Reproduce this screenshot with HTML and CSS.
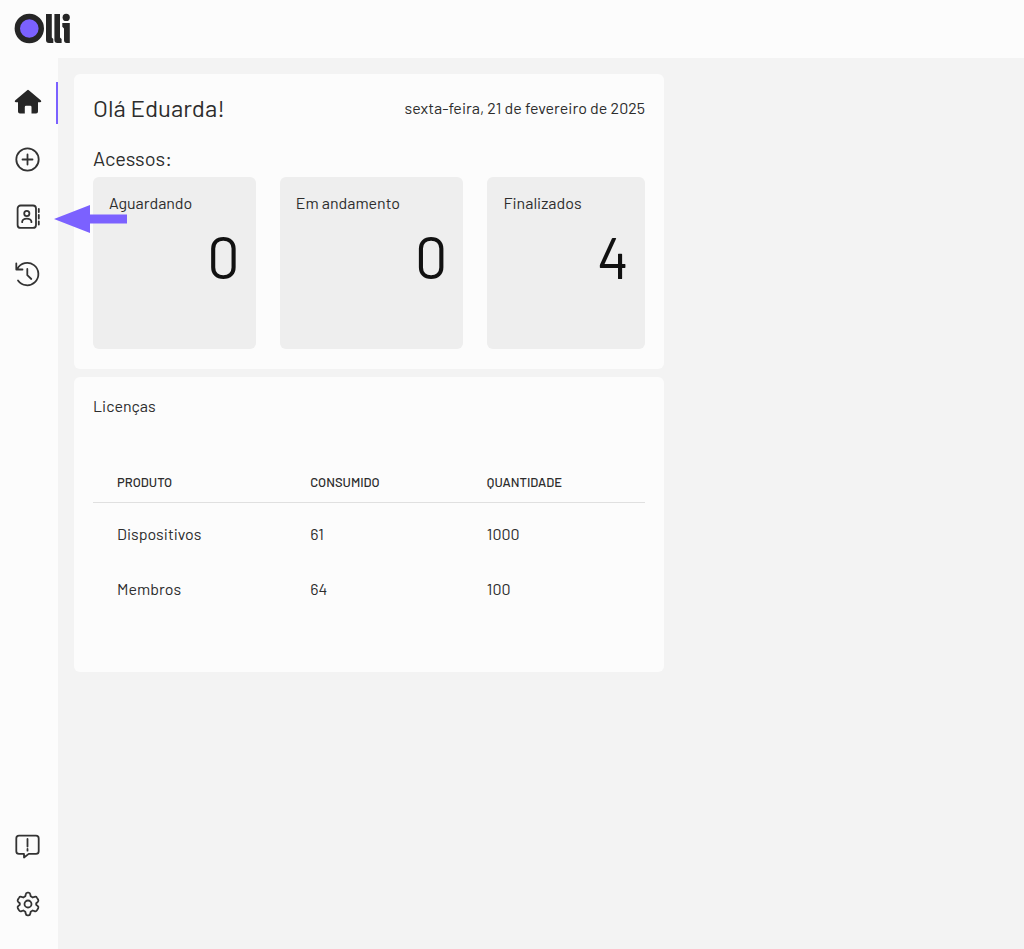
FILE: index.html
```html
<!DOCTYPE html>
<html lang="pt-BR">
<head>
<meta charset="utf-8">
<meta name="viewport" content="width=device-width, initial-scale=1">
<title>Olli</title>
<link rel="stylesheet" href="styles.css">
</head>
<body class="app">
<header class="topbar">
  <a class="brand" href="#" aria-label="Olli">
    <svg width="56" height="32" viewBox="0 0 56 32" aria-hidden="true">
      <circle cx="15.300" cy="15.500" r="12" fill="#7b61ff" stroke="#262626" stroke-width="5.400"/>
      <g fill="#262626">
        <path d="M32 1H37.800V24.500L39.300 26V30H35Q32 30 32 27Z"/>
        <path d="M40.400 1H46V24.500L47.600 26V30H43.400Q40.400 30 40.400 27Z"/>
        <circle cx="52.200" cy="4.400" r="3.600"/>
        <path d="M48.300 10H55.800V30H52.600Q50 30 50 27V15.500L48.300 13.800Z"/>
      </g>
    </svg>
  </a>
</header>
<nav class="sidebar" aria-label="Principal">
  <a class="nav-item nav-item-active" href="#" aria-label="Início" aria-current="page">
    <svg class="icon" viewBox="0 0 28 28"><path d="M13.200 1.200Q14 .5 14.800 1.200L26.700 11.300Q28 13.100 26 13.300H24V22.500Q24 24.500 22 24.500H17.500V18Q17.500 16.800 16.300 16.800H12Q10.800 16.800 10.800 18V24.500H6Q4 24.500 4 22.500V13.300H2Q0 13.100 1.300 11.300Z" fill="#262626"/></svg>
  </a>
  <a class="nav-item" href="#" aria-label="Novo acesso">
    <svg class="icon line" viewBox="0 0 28 28"><circle cx="13.500" cy="13.500" r="11.200"/><path d="M13.500 8.500v10M8.500 13.500h10"/></svg>
  </a>
  <a class="nav-item" href="#" aria-label="Contatos">
    <svg class="icon line" viewBox="0 0 28 28"><rect x="3.600" y="2.500" width="18.400" height="22.400" rx="3"/><circle cx="12.800" cy="10.500" r="2.600"/><path d="M8.200 19.200V18.400Q8.800 15.600 12.800 15.600T17.400 18.400V19.200M24.800 6v3M24.800 12v3.500M24.800 18.500v3"/></svg>
    <svg class="pointer" width="73" height="28" viewBox="0 0 73 28" aria-hidden="true"><path d="M0 14L36 0V9.500H73V18.500H36V28Z" fill="#7b61ff"/></svg>
  </a>
  <a class="nav-item" href="#" aria-label="Histórico">
    <svg class="icon line" viewBox="0 0 28 28"><path d="M3.300 8.800A11.200 11.200 0 1 1 4 20.500M2.300 3.500V9.500H8.500M13.300 9V15.200L17.300 19"/></svg>
  </a>
  <a class="nav-item nav-item-bottom" href="#" aria-label="Comentários">
    <svg class="icon line" viewBox="0 0 28 28"><path d="M5 2.700H22Q24.700 2.700 24.700 5.400V18.200Q24.700 20.900 22 20.900H14.700L10 24.500V20.900H5Q2.300 20.900 2.300 18.200V5.400Q2.300 2.700 5 2.700ZM13.500 6V13.500M13.500 16V17.700"/></svg>
  </a>
  <a class="nav-item" href="#" aria-label="Configurações">
    <svg class="icon line" viewBox="0 0 28 28"><circle cx="14" cy="14" r="3.500"/><path d="M11.700 4.500Q12 2.700 13.500 2.700H14.500Q16 2.700 16.300 4.500L16.700 6.300L18.700 7.500L20.400 6.900Q22.200 6.300 22.900 7.600L24.200 9.800Q24.900 11.100 23.500 12.200L22.200 13.200V14.800L23.500 15.800Q24.900 16.900 24.200 18.200L22.900 20.400Q22.200 21.700 20.400 21.100L18.700 20.500L16.700 21.700L16.300 23.500Q16 25.300 14.500 25.300H13.500Q12 25.300 11.700 23.500L11.300 21.700L9.300 20.500L7.600 21.100Q5.800 21.700 5.100 20.400L3.800 18.200Q3.100 16.900 4.500 15.800L5.800 14.800V13.200L4.500 12.200Q3.100 11.100 3.800 9.800L5.100 7.600Q5.800 6.300 7.600 6.900L9.300 7.500L11.300 6.300Z"/></svg>
  </a>
</nav>
<main class="content">
  <section class="card">
    <div class="greeting">
      <h1 class="title">Olá Eduarda!</h1>
      <time class="date" datetime="2025-02-21">sexta-feira, 21 de fevereiro de 2025</time>
    </div>
    <h2 class="subtitle">Acessos:</h2>
    <div class="tiles">
      <article class="tile"><h3 class="label">Aguardando</h3><p class="count">0</p></article>
      <article class="tile"><h3 class="label">Em andamento</h3><p class="count">0</p></article>
      <article class="tile"><h3 class="label">Finalizados</h3><p class="count">4</p></article>
    </div>
  </section>
  <section class="card card-licenses">
    <h2 class="label" id="licenses">Licenças</h2>
    <table class="table" aria-labelledby="licenses">
      <thead>
        <tr><th class="col-product" scope="col">PRODUTO</th><th class="col-used" scope="col">CONSUMIDO</th><th scope="col">QUANTIDADE</th></tr>
      </thead>
      <tbody>
        <tr><td>Dispositivos</td><td>61</td><td>1000</td></tr>
        <tr><td>Membros</td><td>64</td><td>100</td></tr>
      </tbody>
    </table>
  </section>
</main>
</body>
</html>
```
FILE: styles.css
```css
* {
  box-sizing: border-box;
}

.app {
  margin: 0;
  min-height: 100vh;
  display: grid;
  grid-template-columns: 58px 1fr;
  grid-template-rows: 58px 1fr;
  background: #f3f3f3;
  color: #2d2d2d;
  font-family: Barlow, Roboto, sans-serif;
  font-size: 16px;
  line-height: 20px;
}

.topbar {
  grid-column: 1 / -1;
  padding: 13px 14px;
  background: #fcfcfc;
}

.brand {
  display: inline-flex;
}

.sidebar {
  display: flex;
  flex-direction: column;
  gap: 15px;
  padding: 24px 0;
  background: #fcfcfc;
}

.nav-item {
  position: relative;
  display: flex;
  align-items: center;
  height: 42px;
  padding-left: 14px;
  border-right: 2px solid transparent;
}

.nav-item-active {
  border-color: #7b61ff;
}

.nav-item-bottom {
  margin-top: auto;
}

.icon {
  width: 28px;
  height: 28px;
}

.line {
  fill: none;
  stroke: #333;
  stroke-width: 1.8px;
  stroke-linecap: round;
  stroke-linejoin: round;
}

.pointer {
  position: absolute;
  left: 54px;
  top: 9px;
  z-index: 1;
}

.content {
  display: flex;
  flex-direction: column;
  gap: 8px;
  padding: 16px;
}

.card {
  width: 100%;
  max-width: 590px;
  padding: 19px 19px 20px;
  border-radius: 6px;
  background: #fcfcfc;
}

.card-licenses {
  padding-bottom: 56px;
}

.greeting {
  display: flex;
  flex-wrap: wrap;
  align-items: center;
  justify-content: space-between;
}

.title,
.subtitle,
.label,
.count {
  margin: 0;
  font-weight: 400;
}

.title {
  font-size: 24px;
  line-height: 30px;
}

.subtitle {
  padding: 20px 0 4px;
  font-size: 20px;
  line-height: 30px;
}

.date,
.label {
  font-size: 16px;
}

.tiles {
  display: flex;
  flex-wrap: wrap;
  gap: 24px;
}

.tile {
  flex: 1 1 auto;
  padding: 16px 16px 58px;
  border-radius: 6px;
  background: #eee;
}

.count {
  padding-top: 8px;
  color: #111;
  font-size: 58px;
  line-height: 70px;
  text-align: right;
}

.table {
  width: 100%;
  margin-top: 46px;
  border-collapse: collapse;
  table-layout: fixed;
  text-align: left;
}

.table th {
  height: 40px;
  padding: 0 24px;
  border-bottom: 1px solid #e0e0e0;
  font-size: 13px;
  font-weight: 500;
}

.table td {
  height: 55px;
  padding: 0 24px;
}

.table tbody::before {
  content: "";
  display: table-row;
  height: 4px;
}

.col-product {
  width: 35%;
}

.col-used {
  width: 32%;
}
```
